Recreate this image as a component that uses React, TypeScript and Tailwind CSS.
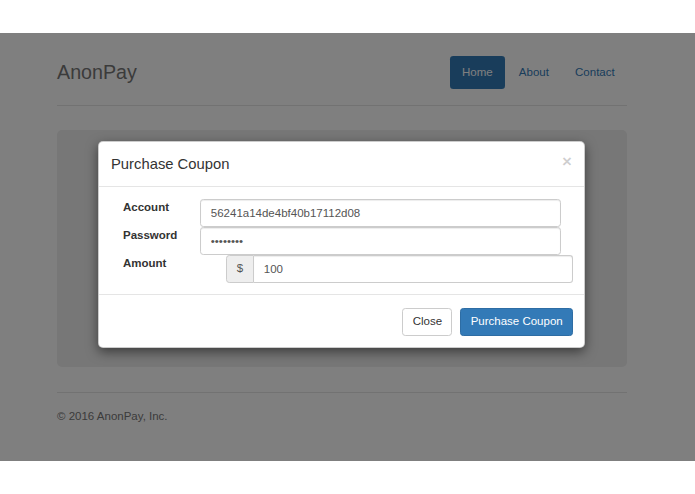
import React from "react"

const navItems = ["Home", "About", "Contact"]

function Header() {
  return (
    <div className="flex items-center justify-between border-b border-[#e5e5e5] pt-[23px] pb-[16px]">
      <h3 className="text-[19.7px] leading-[32px] text-[#777]">AnonPay</h3>
      <ul className="flex gap-[1.6px]">
        {navItems.map((item, i) => (
          <li key={item}>
            <a
              className={
                i === 0
                  ? "block rounded-[3.3px] bg-[#337ab7] px-[12.3px] py-[8.2px] text-[11.5px] leading-[16.4px] text-white"
                  : "block rounded-[3.3px] px-[12.3px] py-[8.2px] text-[11.5px] leading-[16.4px] text-[#337ab7]"
              }
            >
              {item}
            </a>
          </li>
        ))}
      </ul>
    </div>
  )
}

function Field({ label, value, addon }: { label: string; value: string; addon?: string }) {
  return (
    <div className="flex h-[28px] items-start">
      <label className="w-[77px] shrink-0 text-[11.5px] font-bold leading-[16.4px] text-[#333]">{label}</label>
      {addon ? (
        <div className="ml-[26px] flex h-[28px] w-[347px]">
          <span className="flex w-[28px] items-center justify-center rounded-l-[3.3px] border border-[#ccc] bg-[#eee] text-[11.5px] text-[#555]">
            {addon}
          </span>
          <input
            readOnly
            defaultValue={value}
            className="h-[28px] flex-1 rounded-r-[3.3px] border border-l-0 border-[#ccc] px-[9.8px] text-[11.5px] text-[#555] shadow-[inset_0_1px_1px_rgba(0,0,0,0.075)] outline-none"
          />
        </div>
      ) : (
        <input
          readOnly
          defaultValue={value}
          className="h-[28px] w-[361px] rounded-[3.3px] border border-[#ccc] px-[9.8px] text-[11.5px] text-[#555] shadow-[inset_0_1px_1px_rgba(0,0,0,0.075)] outline-none"
        />
      )}
    </div>
  )
}

function PurchaseModal() {
  return (
    <div className="absolute left-[98px] top-[108px] w-[487px] rounded-[5px] border border-black/20 bg-white shadow-[0_4px_12px_rgba(0,0,0,0.5)]">
      <div className="flex h-[45px] items-center justify-between border-b border-[#e5e5e5] px-[12px]">
        <h4 className="text-[14.8px] leading-[21px] text-[#333]">Purchase Coupon</h4>
        <button className="-mt-[5px] text-[17px] font-bold leading-none text-black/20">×</button>
      </div>
      <div className="pt-[12px] pb-[11px] pl-[24px]">
        <Field label="Account" value="56241a14de4bf40b17112d08" />
        <Field label="Password" value="••••••••" />
        <Field label="Amount" value="100" addon="$" />
      </div>
      <div className="flex justify-end gap-[8px] border-t border-[#e5e5e5] pt-[13px] pr-[11px] pb-[11px]">
        <button className="flex h-[28px] items-center rounded-[3.3px] border border-[#ccc] bg-white px-[9.3px] text-[11.5px] text-[#333]">
          Close
        </button>
        <button className="flex h-[28px] items-center rounded-[3.3px] border border-[#2e6da4] bg-[#337ab7] px-[9.3px] text-[11.5px] text-white">
          Purchase Coupon
        </button>
      </div>
    </div>
  )
}

export default function App() {
  return (
    <div className="h-[494px] w-[695px] bg-white font-['Liberation_Sans',Arial,sans-serif]">
      <div className="h-[33px]" />
      <div className="relative h-[428px] overflow-hidden bg-white">
        <div className="ml-[57px] w-[570px]">
          <Header />
          <div className="mt-[24px] h-[237px] rounded-[5px] bg-[#eee]" />
          <footer className="mt-[25px] border-t border-[#e5e5e5] pt-[15.6px]">
            <p className="text-[11.5px] leading-[16.4px] text-[#777]">© 2016 AnonPay, Inc.</p>
          </footer>
        </div>
        {/* modal backdrop */}
        <div className="absolute inset-0 bg-black/50" />
        <PurchaseModal />
      </div>
    </div>
  )
}
